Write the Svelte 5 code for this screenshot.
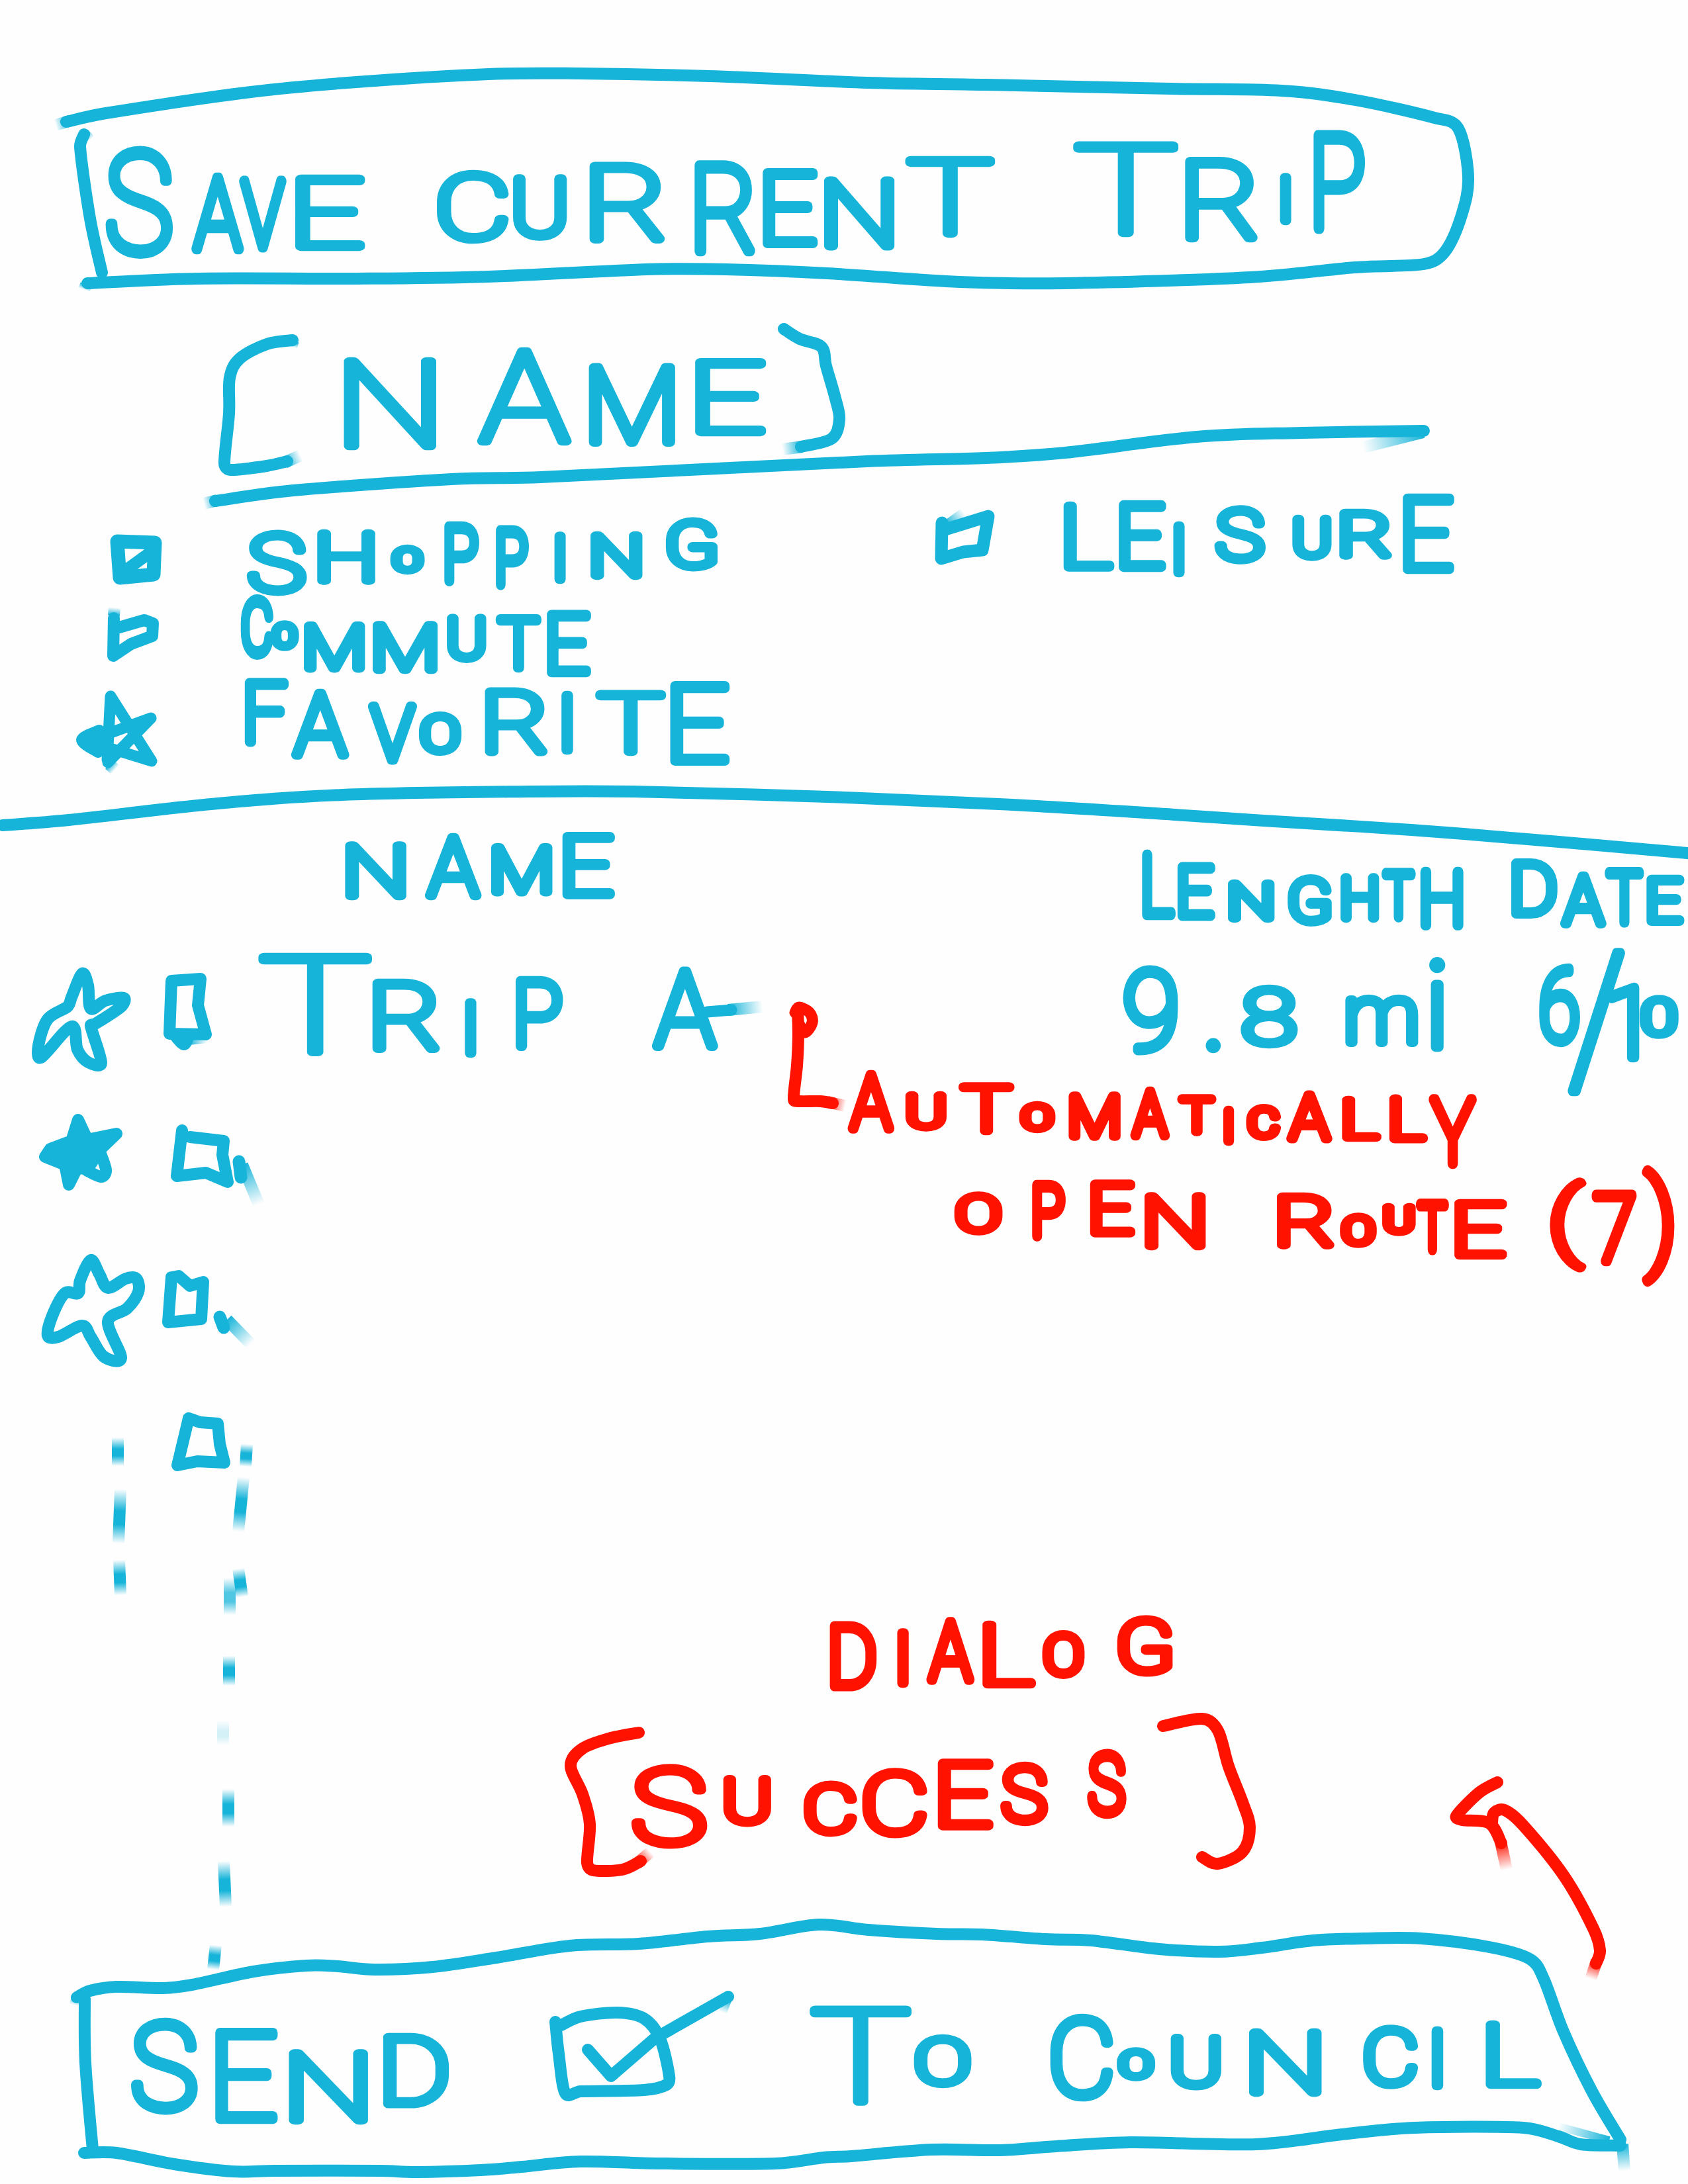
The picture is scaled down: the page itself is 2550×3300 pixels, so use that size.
<script lang="ts">
  type Pt = [number, number];
  type Box = [number, number, number, number]; // left, right, top, bottom
  type Word = { text: string; red?: boolean; boxes: Box[] };
  type Line = { pts: Pt[]; red?: boolean; close?: boolean; sharp?: boolean; fill?: boolean; w?: number };
  type Fade = { pts: Pt[]; red?: boolean; both?: boolean; alpha?: number; w?: number };
  type Section = { id: string; top: number; height: number; words: Word[]; lines: Line[]; fades: Fade[] };

  const PEN = 18;
  const INK = 14;
  const UNIT = 200;
  const ctx = document.createElement('canvas').getContext('2d')!;
  ctx.font = `100 ${UNIT}px Roboto, "Liberation Sans", sans-serif`;

  // Fit every letter of a word into its own box, as uneven lettering needs.
  function fit(word: Word) {
    return [...word.text].map((ch, i) => {
      const [x0, x1, y0, y1] = word.boxes[i];
      const m = ctx.measureText(ch);
      const inkW = m.actualBoundingBoxRight + m.actualBoundingBoxLeft;
      const inkH = m.actualBoundingBoxAscent + m.actualBoundingBoxDescent;
      const size = ch === '.' ? 150 : ((y1 - y0 - INK) / inkH) * UNIT;
      const k = size / UNIT;
      const wanted = (x1 - x0) / (inkW * k + INK);
      const sx = 'Ii1.'.includes(ch) ? 1 : Math.max(0.65, Math.min(1.4, wanted));
      const left = (x0 + x1 - inkW * k * sx) / 2;
      return {
        ch,
        size,
        x: left + m.actualBoundingBoxLeft * k * sx,
        y: y1 - INK / 2 - m.actualBoundingBoxDescent * k,
        len: m.width * k * sx,
        pen: (INK + 0.5) / Math.sqrt(sx)
      };
    });
  }

  // Smooth curve through the points of a pen stroke.
  function curve({ pts, close, sharp }: { pts: Pt[]; close?: boolean; sharp?: boolean }) {
    if (sharp || pts.length < 3) return 'M' + pts.map((p) => p.join(' ')).join('L') + (close ? 'Z' : '');
    const n = pts.length;
    const at = (i: number) => (close ? pts[(i + n) % n] : pts[Math.max(0, Math.min(n - 1, i))]);
    let d = `M${pts[0].join(' ')}`;
    for (let i = 0; i < (close ? n : n - 1); i++) {
      const [a, b, c, e] = [at(i - 1), at(i), at(i + 1), at(i + 2)];
      const len = Math.hypot(c[0] - b[0], c[1] - b[1]);
      const t1 = Math.min(1 / 6, (len * 0.4) / (Math.hypot(c[0] - a[0], c[1] - a[1]) || 1));
      const t2 = Math.min(1 / 6, (len * 0.4) / (Math.hypot(e[0] - b[0], e[1] - b[1]) || 1));
      d += `C${b[0] + (c[0] - a[0]) * t1} ${b[1] + (c[1] - a[1]) * t1} ${c[0] - (e[0] - b[0]) * t2} ${c[1] - (e[1] - b[1]) * t2} ${c[0]} ${c[1]}`;
    }
    return d + (close ? 'Z' : '');
  }

  const dash = (x1: number, y1: number, x2: number, y2: number, alpha = 1): Fade => ({
    pts: [[x1, y1], [x2, y2]], both: true, alpha
  });

  const sections: Section[] = [
    {
      id: 'save', top: 0, height: 470,
      words: [
        { text: 'SAVE', boxes: [[160, 261, 221, 390], [290, 368, 261, 383], [362, 432, 266, 380], [443, 555, 262, 380]] },
        { text: 'CURRENT', boxes: [[659, 770, 255, 369], [775, 857, 262, 364], [890, 1005, 243, 368], [1050, 1140, 242, 386], [1152, 1236, 253, 375], [1244, 1352, 265, 379], [1354, 1517, 235, 361]] },
        { text: 'TRIP', boxes: [[1618, 1784, 212, 360], [1790, 1900, 236, 367], [1926, 1958, 261, 340], [1985, 2061, 197, 353]] }
      ],
      lines: [
        { pts: [[100, 184], [160, 171], [379, 139], [538, 124], [738, 112], [873, 111], [1072, 115], [1310, 125], [1489, 128], [1768, 134], [1936, 137], [2047, 151], [2167, 178], [2203, 194], [2218, 267], [2208, 325], [2183, 380], [2151, 399], [2047, 404], [1888, 419], [1609, 428], [1449, 426], [1250, 413], [1096, 407], [977, 407], [738, 418], [538, 421], [299, 421], [132, 428]] },
        { pts: [[127, 203], [121, 222], [136, 330], [154, 412]] }
      ],
      fades: [{ pts: [[104, 183], [84, 189]] }, { pts: [[126, 202], [136, 212]] }, { pts: [[130, 430], [127, 438]] }]
    },
    {
      id: 'name', top: 470, height: 310,
      words: [
        { text: 'NAME', boxes: [[518, 660, 538, 681], [720, 865, 524, 673], [889, 1020, 548, 675], [1048, 1160, 540, 660]] }
      ],
      lines: [
        { pts: [[442, 514], [403, 520], [362, 542], [347, 571], [346, 625], [339, 700], [348, 710], [403, 704], [434, 697]] },
        { pts: [[1184, 497], [1208, 512], [1241, 524], [1248, 553], [1262, 602], [1268, 634], [1256, 663], [1210, 675]] },
        { pts: [[325, 757], [443, 741], [682, 724], [817, 721], [1310, 697], [1489, 692], [1609, 684], [1808, 660], [1967, 654], [2151, 651]] }
      ],
      fades: [
        { pts: [[443, 515], [440, 524]] }, { pts: [[430, 699], [454, 688]] }, { pts: [[1212, 675], [1182, 679]] },
        { pts: [[328, 756], [308, 761]] }, { pts: [[2150, 653], [2059, 676]] }
      ]
    },
    {
      id: 'options', top: 780, height: 400,
      words: [
        { text: 'SHOPPING', boxes: [[372, 465, 800, 901], [473, 573, 799, 884], [585, 646, 821, 869], [672, 723, 789, 886], [750, 798, 796, 891], [830, 862, 803, 882], [886, 976, 802, 877], [1005, 1085, 781, 864]] },
        { text: 'COMMUTE', boxes: [[365, 412, 899, 995], [408, 452, 936, 984], [458, 552, 938, 1017], [562, 662, 937, 1019], [675, 735, 928, 1002], [749, 818, 928, 1017], [826, 893, 921, 1023]] },
        { text: 'FAVORITE', boxes: [[370, 436, 1024, 1128], [440, 528, 1041, 1148], [556, 630, 1060, 1155], [632, 698, 1074, 1143], [732, 828, 1038, 1143], [842, 872, 1044, 1140], [898, 1008, 1042, 1144], [1012, 1103, 1029, 1157]] },
        { text: 'LEISURE', boxes: [[1606, 1684, 757, 864], [1690, 1762, 756, 864], [1766, 1796, 788, 872], [1834, 1913, 763, 853], [1952, 2012, 777, 848], [2022, 2104, 768, 847], [2119, 2197, 745, 867]] }
      ],
      lines: [
        { pts: [[177, 818], [234, 820], [232, 868], [181, 873]], close: true, sharp: true, w: 21 },
        { pts: [[228, 834], [184, 866]] },
        { pts: [[172, 934], [171, 991], [198, 973], [230, 961], [231, 942], [218, 937], [180, 948]], sharp: true },
        { pts: [[162, 1148], [167, 1052], [229, 1150], [132, 1120], [228, 1085], [163, 1152]], sharp: true, w: 17 },
        { pts: [[150, 1104], [124, 1118], [148, 1136]] }
      ,
        { pts: [[1423, 790], [1422, 844], [1455, 834], [1484, 831], [1493, 780], [1425, 801]], sharp: true, w: 19 }
      ],
      fades: [{ pts: [[172, 930], [173, 918]] }, { pts: [[165, 1155], [174, 1163]] }, { pts: [[1430, 793], [1456, 774]], w: 14 }]
    },
    {
      id: 'trips', top: 1180, height: 1200,
      words: [
        { text: 'NAME', boxes: [[520, 615, 1270, 1361], [642, 728, 1259, 1360], [741, 835, 1274, 1355], [849, 930, 1256, 1359]] },
        { text: 'LENGHTH', boxes: [[1726, 1775, 1285, 1389], [1779, 1836, 1303, 1391], [1850, 1930, 1328, 1395], [1945, 2012, 1320, 1400], [2025, 2083, 1319, 1394], [2088, 2138, 1312, 1393], [2146, 2210, 1310, 1405]] },
        { text: 'DATE', boxes: [[2283, 2353, 1297, 1388], [2357, 2427, 1317, 1402], [2425, 2483, 1312, 1402], [2487, 2545, 1322, 1399]] },
        { text: 'TRIP', boxes: [[388, 565, 1438, 1598], [562, 665, 1478, 1591], [694, 728, 1509, 1598], [779, 850, 1475, 1588]] },
        { text: 'A', boxes: [[985, 1085, 1461, 1588]] },
        { text: '9.8', boxes: [[1697, 1779, 1459, 1594], [1820, 1846, 1565, 1592], [1873, 1962, 1486, 1585]] },
        { text: 'mi', boxes: [[2032, 2143, 1502, 1582], [2155, 2188, 1446, 1589]] },
        { text: '6/10', boxes: [[2326, 2386, 1457, 1581], [2369, 2455, 1432, 1655], [2440, 2464, 1484, 1605], [2476, 2537, 1502, 1571]] },
        { text: 'AUTOMATICALLY', red: true, boxes: [[1281, 1351, 1617, 1712], [1364, 1434, 1649, 1711], [1447, 1534, 1634, 1716], [1536, 1598, 1663, 1714], [1614, 1693, 1649, 1724], [1708, 1767, 1643, 1723], [1778, 1838, 1652, 1717], [1842, 1870, 1670, 1731], [1882, 1936, 1668, 1725], [1943, 2013, 1648, 1728], [2026, 2088, 1655, 1726], [2098, 2158, 1653, 1728], [2159, 2230, 1654, 1765]] },
        { text: 'OPEN', red: true, boxes: [[1440, 1516, 1799, 1868], [1560, 1609, 1784, 1875], [1646, 1716, 1782, 1870], [1724, 1826, 1801, 1890]] },
        { text: 'ROUTE', red: true, boxes: [[1928, 2017, 1801, 1889], [2023, 2081, 1832, 1887], [2087, 2140, 1818, 1869], [2140, 2188, 1812, 1895], [2196, 2278, 1810, 1904]] },
        { text: '(7)', red: true, boxes: [[2339, 2399, 1777, 1924], [2405, 2472, 1799, 1914], [2480, 2530, 1760, 1945]] }
      ],
      lines: [
        { pts: [[4, 1247], [104, 1239], [319, 1215], [518, 1201], [797, 1196], [957, 1196], [1250, 1204], [1530, 1216], [1775, 1231], [1909, 1240], [2132, 1254], [2355, 1272], [2560, 1290]] },
        { pts: [[1068, 1529], [1105, 1526]], w: 17 },
        { pts: [[124, 1471], [108, 1507], [102, 1521], [72, 1540], [58, 1580], [62, 1598], [108, 1551], [117, 1586], [133, 1605], [153, 1606], [137, 1550], [144, 1547], [183, 1521], [187, 1508], [159, 1512], [137, 1524], [133, 1489]], close: true },
        { pts: [[259, 1482], [303, 1479], [299, 1519], [311, 1563], [256, 1562]], close: true, sharp: true },
        { pts: [[267, 1568], [278, 1578], [284, 1568]] },
        { pts: [[118, 1692], [132, 1722], [176, 1713], [148, 1740], [138, 1758], [115, 1768], [104, 1790], [98, 1760], [68, 1748], [76, 1736], [108, 1724]], close: true, sharp: true, fill: true },
        { pts: [[150, 1738], [160, 1768], [152, 1778], [125, 1765]] },
        { pts: [[275, 1708], [267, 1777], [311, 1772], [344, 1786], [336, 1745], [338, 1724], [287, 1718]], sharp: true },
        { pts: [[361, 1755], [364, 1779]], w: 19 },
        { pts: [[137, 1904], [121, 1935], [118, 1954], [98, 1954], [79, 1988], [72, 2018], [88, 2020], [124, 2003], [137, 2020], [157, 2050], [183, 2052], [163, 1997], [192, 1977], [209, 1952], [206, 1932], [190, 1932], [163, 1946], [150, 1925]], close: true },
        { pts: [[259, 1930], [254, 1998], [304, 1993], [307, 1937], [287, 1943], [270, 1928]], close: true, sharp: true },
        { pts: [[332, 1990], [338, 2006]], w: 19 },
        { pts: [[285, 2143], [302, 2149], [329, 2151], [332, 2182], [339, 2210], [298, 2208], [268, 2214]], close: true, sharp: true },
        { red: true, pts: [[1205, 1525], [1206, 1565], [1204, 1610], [1199, 1661], [1208, 1664], [1239, 1664], [1258, 1667]] },
        { red: true, pts: [[1201, 1530], [1207, 1522], [1223, 1530], [1227, 1545], [1216, 1560], [1206, 1545]], w: 17 }
      ],
      fades: [
        { pts: [[1100, 1526], [1152, 1521]] }, { pts: [[366, 1760], [391, 1820]] },
        { pts: [[343, 1994], [379, 2031]] }, { pts: [[285, 1570], [312, 1567]] },
        { red: true, pts: [[1250, 1665], [1277, 1671]] },
        dash(178, 2172, 178, 2215), dash(182, 2250, 179, 2332), dash(180, 2357, 182, 2410),
        dash(373, 2182, 371, 2216), dash(368, 2232, 360, 2314), dash(360, 2370, 366, 2413)
      ]
    },
    {
      id: 'dialog', top: 2380, height: 500,
      words: [
        { text: 'DIALOG', red: true, boxes: [[1254, 1324, 2450, 2555], [1349, 1379, 2460, 2550], [1400, 1472, 2444, 2545], [1483, 1566, 2448, 2552], [1574, 1639, 2463, 2537], [1687, 1772, 2440, 2534]] },
        { text: 'SUCCESS', red: true, boxes: [[953, 1070, 2664, 2794], [1092, 1166, 2681, 2761], [1213, 1296, 2690, 2776], [1302, 1402, 2670, 2778], [1416, 1502, 2657, 2766], [1511, 1584, 2662, 2759], [1643, 1701, 2643, 2747]] }
      ],
      lines: [
        { red: true, pts: [[965, 2618], [923, 2626], [880, 2642], [862, 2668], [880, 2711], [891, 2756], [887, 2814], [896, 2826], [940, 2825], [968, 2812]] },
        { red: true, pts: [[1757, 2608], [1816, 2597], [1840, 2615], [1856, 2669], [1877, 2723], [1888, 2761], [1877, 2798], [1840, 2816], [1816, 2806]] },
        { red: true, pts: [[2262, 2693], [2234, 2709], [2200, 2744], [2209, 2750], [2250, 2755], [2268, 2785]] },
        { red: true, pts: [[2254, 2754], [2257, 2739], [2273, 2735], [2301, 2758], [2363, 2835], [2407, 2914], [2417, 2947], [2411, 2967]] }
      ],
      fades: [
        { red: true, pts: [[962, 2816], [983, 2798]] }, { red: true, pts: [[2267, 2783], [2276, 2825]] },
        { red: true, pts: [[2412, 2963], [2403, 2990]] },
        dash(347, 2384, 347, 2440, 0.75), dash(346, 2502, 346, 2547), dash(337, 2600, 337, 2637, 0.18),
        dash(345, 2703, 345, 2760), dash(338, 2812, 341, 2881), dash(326, 2939, 322, 2976)
      ]
    },
    {
      id: 'send', top: 2880, height: 420,
      words: [
        { text: 'SEND', boxes: [[198, 299, 3048, 3195], [325, 420, 3063, 3209], [432, 560, 3095, 3211], [578, 679, 3071, 3186]] },
        { text: 'TO', boxes: [[1222, 1379, 3030, 3184], [1379, 1469, 3072, 3156]] },
        { text: 'COUNCIL', boxes: [[1587, 1682, 3042, 3175], [1684, 1748, 3092, 3146], [1768, 1846, 3072, 3159], [1875, 2008, 3063, 3169], [2059, 2143, 3059, 3157], [2153, 2190, 3062, 3158], [2243, 2330, 3051, 3157]] }
      ],
      lines: [
        { pts: [[116, 3018], [136, 3008], [176, 3002], [247, 3004], [295, 2998], [383, 2979], [463, 2970], [510, 2971], [566, 2976], [654, 2972], [750, 2958], [861, 2940], [965, 2937], [1069, 2926], [1148, 2922], [1237, 2908], [1312, 2916], [1415, 2922], [1484, 2923], [1579, 2930], [1648, 2932], [1751, 2945], [1841, 2949], [1906, 2943], [1983, 2932], [2061, 2929], [2147, 2929], [2250, 2942], [2311, 2960], [2332, 2990], [2362, 3070], [2405, 3160], [2448, 3233]] },
        { pts: [[128, 3020], [129, 3117], [140, 3248]] },
        { pts: [[127, 3253], [176, 3253], [263, 3270], [351, 3281], [415, 3280], [574, 3280], [630, 3282], [726, 3279], [789, 3274], [877, 3266], [997, 3269], [1172, 3269], [1244, 3260], [1286, 3258], [1407, 3248], [1510, 3249], [1596, 3243], [1708, 3237], [1897, 3240], [2027, 3225], [2138, 3215], [2302, 3215], [2354, 3228], [2388, 3240], [2448, 3242]] },
        { pts: [[839, 3055], [844, 3103], [854, 3163], [877, 3160], [973, 3158], [1007, 3150], [1011, 3137], [997, 3080], [973, 3050], [933, 3041], [877, 3047], [848, 3060]] },
        { pts: [[888, 3097], [923, 3137], [989, 3080], [1100, 3017]], sharp: true }
      ],
      fades: [
        { pts: [[117, 3017], [114, 3030]] }, { pts: [[2451, 3240], [2454, 3280]] },
        { pts: [[2431, 3234], [2354, 3213]], w: 12 }, { pts: [[1100, 3020], [1092, 3041]], w: 12 }
      ]
    }
  ];
</script>

<main>
  {#each sections as s (s.id)}
    <section>
      <svg viewBox="0 {s.top} 2550 {s.height}" width="2550" height={s.height}>
        <defs>
          {#each s.fades as f, i}
            <linearGradient
              id="{s.id}-{i}"
              gradientUnits="userSpaceOnUse"
              x1={f.pts[0][0]} y1={f.pts[0][1]} x2={f.pts[1][0]} y2={f.pts[1][1]}
              class:red={f.red}
            >
              <stop offset="0" stop-color="currentColor" stop-opacity={f.both ? 0 : 1} />
              {#if f.both}
                <stop offset="0.4" stop-color="currentColor" stop-opacity={f.alpha} />
                <stop offset="0.65" stop-color="currentColor" stop-opacity={f.alpha} />
              {/if}
              <stop offset="1" stop-color="currentColor" stop-opacity="0" />
            </linearGradient>
          {/each}
        </defs>
        {#each s.fades as f, i}
          <path class="fade" d={curve(f)} stroke="url(#{s.id}-{i})" stroke-width={f.w ?? PEN} />
        {/each}
        {#each s.lines as l}
          <path class="line" class:red={l.red} class:fill={l.fill} d={curve(l)} stroke-width={l.w ?? PEN} />
        {/each}
        {#each s.words as w}
          <text class:red={w.red}>{#each fit(w) as g}<tspan x={g.x} y={g.y} font-size={g.size} stroke-width={g.pen} textLength={g.len} lengthAdjust="spacingAndGlyphs">{g.ch}</tspan>{/each}</text>
        {/each}
      </svg>
    </section>
  {/each}
</main>

<style>
  :global(body) {
    margin: 0;
    background: #fefefe;
  }
  main {
    display: flex;
    flex-direction: column;
    width: 2550px;
    height: 3300px;
    overflow: hidden;
    color: #17b4d9;
    font-family: Roboto, 'Liberation Sans', sans-serif;
    font-weight: 100;
  }
  svg {
    display: block;
    overflow: visible;
  }
  .red {
    color: #ff1200;
  }
  .line {
    fill: none;
    stroke: currentColor;
    stroke-linecap: round;
    stroke-linejoin: round;
  }
  .fill {
    fill: currentColor;
  }
  .fade {
    fill: none;
    stroke-linecap: butt;
  }
  text {
    fill: currentColor;
    stroke: currentColor;
    stroke-linejoin: round;
    stroke-linecap: round;
  }
</style>
